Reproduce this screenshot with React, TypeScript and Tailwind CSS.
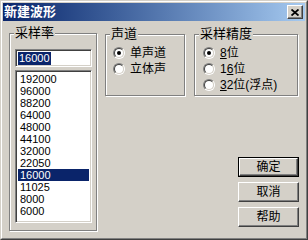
const rates = ["192000", "96000", "88200", "64000", "48000", "44100", "32000", "22050", "16000", "11025", "8000", "6000"];

const raised = "border border-t-white border-l-white border-r-[#404040] border-b-[#404040] shadow-[inset_-1px_-1px_0_#808080]";
const sunken = "border border-t-[#808080] border-l-[#808080] border-r-white border-b-white shadow-[inset_1px_1px_0_#404040,inset_-1px_-1px_0_#d4d0c8]";

function Group({ label, className, children }: { label: string; className: string; children: React.ReactNode }) {
  return (
    <div className={"relative border border-[#808080] shadow-[inset_1px_1px_0_#fff,1px_1px_0_#fff] " + className}>
      <span className="absolute left-[4px] top-[-8px] bg-[#d4d0c8] px-[1px] text-[13px] leading-[14px]">{label}</span>
      {children}
    </div>
  );
}

function Radio({ checked, children }: { checked?: boolean; children: React.ReactNode }) {
  return (
    <div className="flex h-[16px] items-center gap-[5px]">
      <div className="h-[12px] w-[12px] rounded-full border border-t-[#808080] border-l-[#808080] border-r-white border-b-white">
        <div className="flex h-full w-full items-center justify-center rounded-full border border-t-[#404040] border-l-[#404040] border-r-[#d4d0c8] border-b-[#d4d0c8] bg-white">
          {checked && <div className="h-[4px] w-[4px] rounded-full bg-black" />}
        </div>
      </div>
      <span className="text-[12px] leading-[14px]">{children}</span>
    </div>
  );
}

function Button({ children, isDefault }: { children: React.ReactNode; isDefault?: boolean }) {
  const inner = (
    <div className={"flex h-full w-full items-center justify-center bg-[#d4d0c8] text-[12px] " + raised}>{children}</div>
  );
  return isDefault ? (
    <div className="h-[20px] w-[61px] border border-black">{inner}</div>
  ) : (
    <div className="h-[20px] w-[61px]">{inner}</div>
  );
}

export default function App() {
  return (
    <div className="h-[240px] w-[308px] border border-t-[#d4d0c8] border-l-[#d4d0c8] border-r-[#404040] border-b-[#404040] bg-[#d4d0c8] font-['Liberation_Sans','Noto_Sans_CJK_SC',sans-serif] text-black">
      <div className="flex h-full flex-col border border-t-white border-l-white border-r-[#808080] border-b-[#808080] p-px">
        {/* title bar */}
        <div className="flex h-[18px] items-center justify-between bg-gradient-to-r from-[#0a246a] to-[#a6caf0] pl-[1px] pr-[2px]">
          <span className="text-[13px] font-bold leading-[16px] text-white">新建波形</span>
          <div className={"flex h-[14px] w-[16px] items-center justify-center bg-[#d4d0c8] " + raised}>
            <svg width="8" height="7" viewBox="0 0 8 7">
              <path d="M0.5 0.5 L7.5 6.5 M7.5 0.5 L0.5 6.5" stroke="black" strokeWidth="1.8" />
            </svg>
          </div>
        </div>

        <div className="flex flex-1">
          <Group label="采样率" className="ml-[6px] mt-[12px] h-[198px] w-[88px] pl-[5px] pt-[15px]">
            <div className={"h-[18px] w-[77px] bg-white " + sunken}>
              <div className="pl-[2px] pt-[2px]">
                <span className="block w-fit bg-[#0a246a] px-[1px] text-[11px] leading-[13px] text-white">16000</span>
              </div>
            </div>
            <div className={"mt-[3px] h-[153px] w-[77px] bg-white p-[2px] " + sunken}>
              {rates.map((r, i) => (
                <div
                  key={r}
                  className={
                    "h-[12px] pl-[2px] text-[11px] leading-[12px] " + (i === 8 ? "bg-[#0a246a] text-white" : "text-black")
                  }
                >
                  {r}
                </div>
              ))}
            </div>
          </Group>

          <div className="ml-[8px] flex w-[194px] flex-col">
            <div className="mt-[13px] flex">
              <Group label="声道" className="h-[62px] w-[80px] pl-[7px] pt-[10px]">
                <Radio checked>单声道</Radio>
                <Radio>立体声</Radio>
              </Group>
              <Group label="采样精度" className="ml-[9px] h-[62px] w-[104px] pl-[8px] pt-[10px]">
                <Radio checked>
                  <u>8</u>位
                </Radio>
                <Radio>
                  1<u>6</u>位
                </Radio>
                <Radio>
                  <u>3</u>2位(浮点)
                </Radio>
              </Group>
            </div>
            <div className="mt-[61px] flex flex-col items-end gap-[5px]">
              <Button isDefault>确定</Button>
              <Button>取消</Button>
              <Button>帮助</Button>
            </div>
          </div>
        </div>
      </div>
    </div>
  );
}
